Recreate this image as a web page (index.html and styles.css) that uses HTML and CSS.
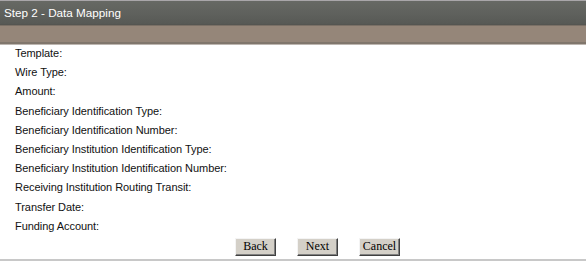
FILE: index.html
```html
<!DOCTYPE html>
<html lang="en">
<head>
    <meta charset="UTF-8">
    <title>Step 2 - Data Mapping</title>
    <link rel="stylesheet" href="styles.css">
</head>
<body>
    <div class="panel">
        <div class="title">Step 2 - Data Mapping</div>
        <div class="band"></div>

        <div class="fields">
            <div class="field">Template:</div>
            <div class="field">Wire Type:</div>
            <div class="field">Amount:</div>
            <div class="field">Beneficiary Identification Type:</div>
            <div class="field">Beneficiary Identification Number:</div>
            <div class="field">Beneficiary Institution Identification Type:</div>
            <div class="field">Beneficiary Institution Identification Number:</div>
            <div class="field">Receiving Institution Routing Transit:</div>
            <div class="field">Transfer Date:</div>
            <div class="field">Funding Account:</div>
        </div>

        <div class="buttons">
            <button>Back</button>
            <button>Next</button>
            <button>Cancel</button>
        </div>
    </div>
</body>
</html>
```

FILE: styles.css
```css
body {
    margin: 0;
    background: white;
    font-family: 'Liberation Sans', Arial, sans-serif;
}
.panel {
    width: 586px;
    height: 261px;
    border-bottom: 2px solid #c8c8c8;
    box-sizing: border-box;
}
.title {
    height: 23px;
    border-top: 1px solid #a9a6a9;
    border-bottom: 1px solid #545551;
    background: linear-gradient(#676964, #5e605c 60%, #575955);
    color: white;
    font-size: 11.7px;
    line-height: 23px;
    padding-left: 4px;
}
.band {
    height: 16px;
    background: #958679;
    border-top: 1px solid #7a7066;
    border-bottom: 2px solid #80766c;
    box-shadow: 0 1px 0 #bdb6b0;
}
.fields {
    padding-left: 15px;
}
.field {
    font-size: 11px;
    color: #111;
    height: 19.2px;
    line-height: 19px;
    letter-spacing: -0.06px;
}
.buttons {
    display: flex;
    justify-content: center;
    gap: 21px;
    margin-top: 2px;
    padding-left: 49px;
}
button {
    font-family: 'Liberation Serif', 'Times New Roman', serif;
    font-size: 12px;
    background: #d4d0c8;
    color: black;
    width: 41px;
    height: 18px;
    padding: 0;
    border: 1px solid;
    border-color: #f4f4f4 #404040 #404040 #f4f4f4;
    box-shadow: inset -1px -1px 0 #808080;
    border-radius: 0;
}
```
